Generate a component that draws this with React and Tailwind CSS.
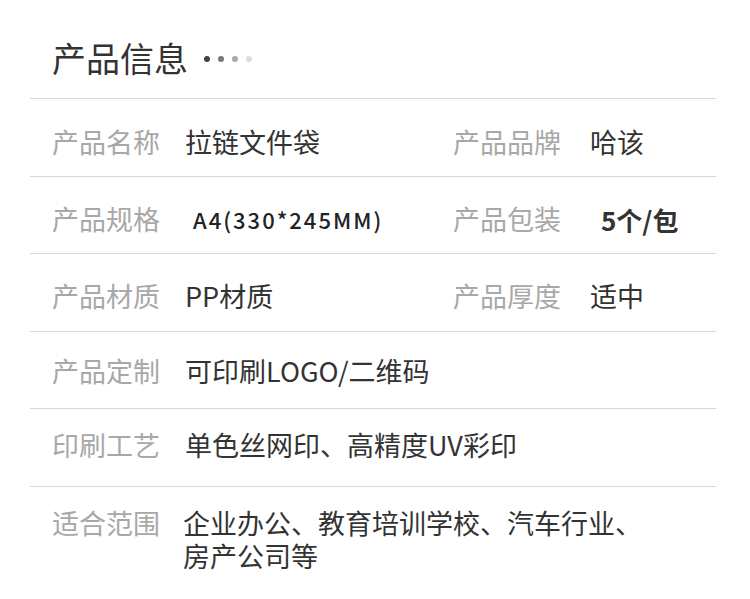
import React from "react";

const rows = [
  { pt: "pt-[10px]", cells: [["产品名称", "拉链文件袋"], ["产品品牌", "哈该"]] },
  { pt: "pt-[9px]", cells: [["产品规格", "A4(330*245MM)", "spec"], ["产品包装", "5个/包", "pack"]] },
  { pt: "pt-[7px]", cells: [["产品材质", "PP材质"], ["产品厚度", "适中"]] },
  { pt: "pt-[2px]", cells: [["产品定制", "可印刷LOGO/二维码"]] },
  { pt: "pb-[4px]", cells: [["印刷工艺", "单色丝网印、高精度UV彩印"]] },
];

function Value({ text, kind }) {
  if (kind === "spec") {
    return (
      <span className="pl-[8px] text-[22px] font-medium tracking-[2px] text-[#222]">
        {text}
      </span>
    );
  }
  if (kind === "pack") {
    return (
      <span className="pl-[11px] text-[26px] font-bold text-[#333]">{text}</span>
    );
  }
  return <span className="text-[27px] text-[#333] whitespace-nowrap">{text}</span>;
}

function Cell({ label, value, kind, left }) {
  return (
    <div className={`flex items-center ${left ? "w-[401px]" : "flex-1"}`}>
      <span
        className={`${left ? "w-[133px]" : "w-[137px]"} shrink-0 text-[27px] text-[#a8a8a8]`}
      >
        {label}
      </span>
      <Value text={value} kind={kind} />
    </div>
  );
}

export default function App() {
  return (
    <div
      className="w-[750px] h-[599px] bg-white overflow-hidden"
      style={{ fontFamily: '"Noto Sans CJK SC", "Noto Sans", sans-serif' }}
    >
      <div className="ml-[30px] w-[686px]">
        <div className="h-[99px] flex items-center pl-[22px] pt-[18px] border-b border-[#d6d6d6]">
          <span className="text-[34px] text-[#333] leading-none">产品信息</span>
          <div className="flex items-center gap-[8px] ml-[16px] mt-[2px]">
            <span className="w-[6px] h-[6px] rounded-full bg-[#444]" />
            <span className="w-[6px] h-[6px] rounded-full bg-[#777]" />
            <span className="w-[6px] h-[6px] rounded-full bg-[#aaa]" />
            <span className="w-[6px] h-[6px] rounded-full bg-[#ddd]" />
          </div>
        </div>
        {rows.map((r, i) => (
          <div
            key={i}
            className={`h-[77.6px] flex items-center pl-[22px] border-b border-[#d6d6d6] ${r.pt}`}
          >
            <Cell label={r.cells[0][0]} value={r.cells[0][1]} kind={r.cells[0][2]} left />
            {r.cells[1] && (
              <Cell label={r.cells[1][0]} value={r.cells[1][1]} kind={r.cells[1][2]} />
            )}
          </div>
        ))}
        <div className="flex pl-[22px] pt-[19px]">
          <span className="w-[131px] shrink-0 text-[27px] text-[#a8a8a8] leading-[33px]">
            适合范围
          </span>
          <span className="w-[470px] text-[27px] text-[#333] leading-[33px]">
            企业办公、教育培训学校、汽车行业、房产公司等
          </span>
        </div>
      </div>
    </div>
  );
}
